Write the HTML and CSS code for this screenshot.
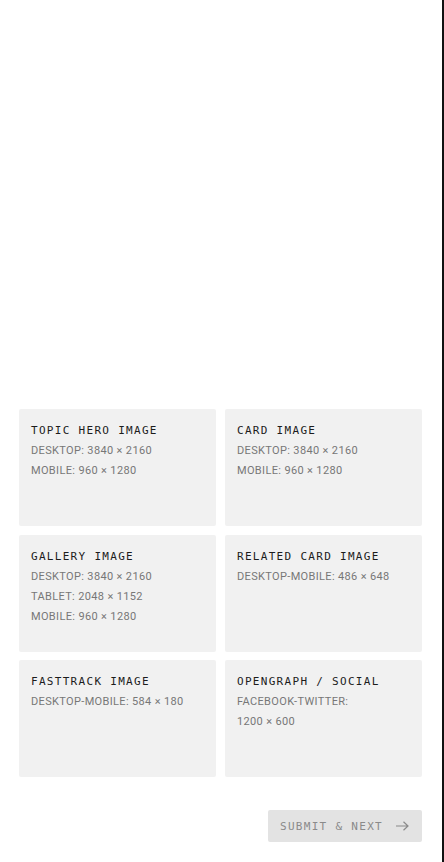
FILE: index.html
```html
<!DOCTYPE html>
<html>
<head>
<meta charset="utf-8">
<link rel="stylesheet" href="styles.css">
</head>
<body>
<div class="page">
  <div class="hero-space"></div>
  <div class="grid">
    <div class="card">
      <div class="title">TOPIC HERO IMAGE</div>
      <div class="line">DESKTOP: 3840 × 2160</div>
      <div class="line">MOBILE: 960 × 1280</div>
    </div>
    <div class="card">
      <div class="title">CARD IMAGE</div>
      <div class="line">DESKTOP: 3840 × 2160</div>
      <div class="line">MOBILE: 960 × 1280</div>
    </div>
    <div class="card">
      <div class="title">GALLERY IMAGE</div>
      <div class="line">DESKTOP: 3840 × 2160</div>
      <div class="line">TABLET: 2048 × 1152</div>
      <div class="line">MOBILE: 960 × 1280</div>
    </div>
    <div class="card">
      <div class="title">RELATED CARD IMAGE</div>
      <div class="line">DESKTOP-MOBILE: 486 × 648</div>
    </div>
    <div class="card">
      <div class="title">FASTTRACK IMAGE</div>
      <div class="line">DESKTOP-MOBILE: 584 × 180</div>
    </div>
    <div class="card">
      <div class="title">OPENGRAPH / SOCIAL</div>
      <div class="line">FACEBOOK-TWITTER:</div>
      <div class="line">1200 × 600</div>
    </div>
  </div>
  <div class="actions">
    <button class="submit">SUBMIT &amp; NEXT
      <svg width="14" height="10" viewBox="0 0 14 10" fill="none" stroke="currentColor" stroke-width="1.2"><path d="M1 5h12M8.5 0.8L13 5l-4.5 4.2"/></svg>
    </button>
  </div>
</div>
</body>
</html>
```
FILE: styles.css
```css
* { box-sizing: border-box; }
html, body { margin: 0; padding: 0; background: #fff; }
body { width: 444px; height: 862px; overflow: hidden; }
.page {
  width: 444px;
  height: 862px;
  border-right: 2px solid #111;
  padding: 0 20px 0 19px;
  display: flex;
  flex-direction: column;
}
.hero-space { height: 409px; flex: none; }
.grid {
  display: grid;
  grid-template-columns: 197px 197px;
  grid-auto-rows: 117px;
  column-gap: 9px;
  row-gap: 8.5px;
}
.card {
  background: #f1f1f1;
  border-radius: 2px;
  padding: 12px 12px;
}
.title {
  font-family: "DejaVu Sans Mono", "Liberation Mono", monospace;
  font-size: 11px;
  letter-spacing: 1.3px;
  line-height: 19px;
  margin-bottom: 1px;
  color: #1c1c1c;
}
.line {
  font-family: Roboto, "Liberation Sans", sans-serif;
  font-size: 11px;
  letter-spacing: 0.35px;
  line-height: 20px;
  color: #777;
}
.actions {
  display: flex;
  justify-content: flex-end;
  margin-top: 33px;
}
.submit {
  width: 154px;
  height: 32px;
  border: none;
  border-radius: 2px;
  background: #e3e3e3;
  color: #8a8a8a;
  font-family: "DejaVu Sans Mono", "Liberation Mono", monospace;
  font-size: 11px;
  letter-spacing: 1.3px;
  padding: 0 13px 0 12px;
  display: flex;
  align-items: center;
  justify-content: space-between;
}
.submit svg { margin-left: 10px; }
```
